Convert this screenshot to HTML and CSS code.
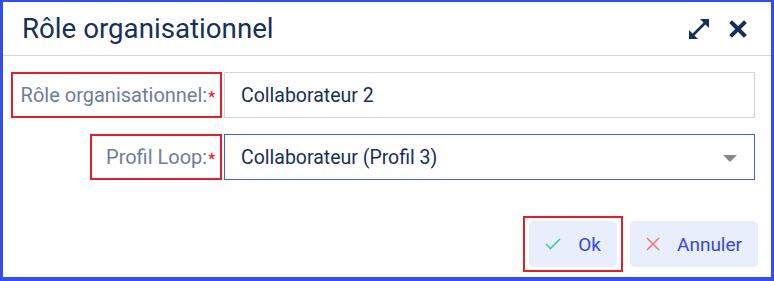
FILE: index.html
```html
<!DOCTYPE html>
<html lang="fr">
<head>
<meta charset="utf-8">
<link rel="stylesheet" href="styles.css">
</head>
<body>
<div class="dialog">
  <div class="header">
    <div class="title">Rôle organisationnel</div>
    <div class="tools">
      <svg class="expand" width="24" height="24" viewBox="0 0 24 24">
        <path d="M6 18L18 6" stroke="#15305a" stroke-width="2.6"/>
        <path d="M13 2h9v9z M11 22H2v-9z" fill="#15305a"/>
      </svg>
      <svg class="close" width="18" height="18" viewBox="0 0 18 18">
        <path d="M3 3L15 15M15 3L3 15" stroke="#15305a" stroke-width="4" stroke-linecap="square"/>
      </svg>
    </div>
  </div>
  <div class="form">
    <div class="row">
      <div class="label-col"><span class="label mark">Rôle organisationnel:<span class="req">*</span></span></div>
      <div class="field input">Collaborateur 2</div>
    </div>
    <div class="row">
      <div class="label-col"><span class="label label-wide mark">Profil Loop:<span class="req">*</span></span></div>
      <div class="field select">Collaborateur (Profil 3)<span class="caret"></span></div>
    </div>
  </div>
  <div class="actions">
    <div class="mark btn-wrap">
      <button class="btn">
        <svg width="16" height="12" viewBox="0 0 16 12"><path d="M1 6l4.5 4.5L15 1" fill="none" stroke="#48c4bf" stroke-width="1.6"/></svg>
        <span>Ok</span>
      </button>
    </div>
    <button class="btn">
      <svg width="14" height="14" viewBox="0 0 14 14"><path d="M1 1L13 13M13 1L1 13" fill="none" stroke="#f27a74" stroke-width="1.6"/></svg>
      <span>Annuler</span>
    </button>
  </div>
</div>
</body>
</html>
```
FILE: styles.css
```css
html, body { margin: 0; padding: 0; background: #fff; }
body { font-family: Roboto, "Noto Sans", sans-serif; }
.dialog {
  width: 774px; height: 281px; box-sizing: border-box;
  border-style: solid; border-color: #2f4ff0;
  border-width: 2px 3px 4px 3px;
  display: flex; flex-direction: column;
}
.header {
  height: 54px; box-sizing: border-box;
  border-bottom: 1px solid #d4d4d4;
  display: flex; align-items: center; justify-content: space-between;
  padding: 0 24px 0 19px;
}
.title { font-size: 27.7px; color: #15305a; padding-bottom: 1px; }
.tools { display: flex; align-items: center; gap: 18px; }
.expand { margin-top: 1px; }
.form { padding: 16px 16px 0 7px; display: flex; flex-direction: column; gap: 16px; }
.row { display: flex; align-items: center; gap: 2px; }
.label-col { width: 212px; display: flex; justify-content: flex-end; }
.mark { border: 2px solid #e41e2b; }
.label {
  font-size: 20px; color: #6b7e9a;
  padding: 0 5px 0 8px; height: 42px; display: flex; align-items: center;
}
.label-wide { padding-left: 14px; }
.req { color: #e41e2b; font-size: 15px; font-weight: bold; margin-left: 1px; margin-top: 3px; }
.field {
  flex: 1; height: 46px; box-sizing: border-box;
  display: flex; align-items: center; padding-left: 16px;
  font-size: 19.5px; color: #15305a;
}
.input { border: 1px solid #d4d4d4; }
.select { border: 1px solid #3b63f0; position: relative; }
.caret {
  position: absolute; right: 17px; top: 20px;
  border-left: 7px solid transparent; border-right: 7px solid transparent;
  border-top: 7px solid #888;
}
.actions {
  margin-top: auto; padding: 0 13px 5px 0;
  display: flex; justify-content: flex-end; align-items: center; gap: 7px;
}
.btn-wrap { padding: 3px 4px; }
.btn {
  height: 46px; border: none; border-radius: 5px; background: #e8eefb;
  font-family: Roboto, sans-serif; font-size: 19px; color: #3547e8;
  display: flex; align-items: center; gap: 17px; padding: 0 16px;
}
```
